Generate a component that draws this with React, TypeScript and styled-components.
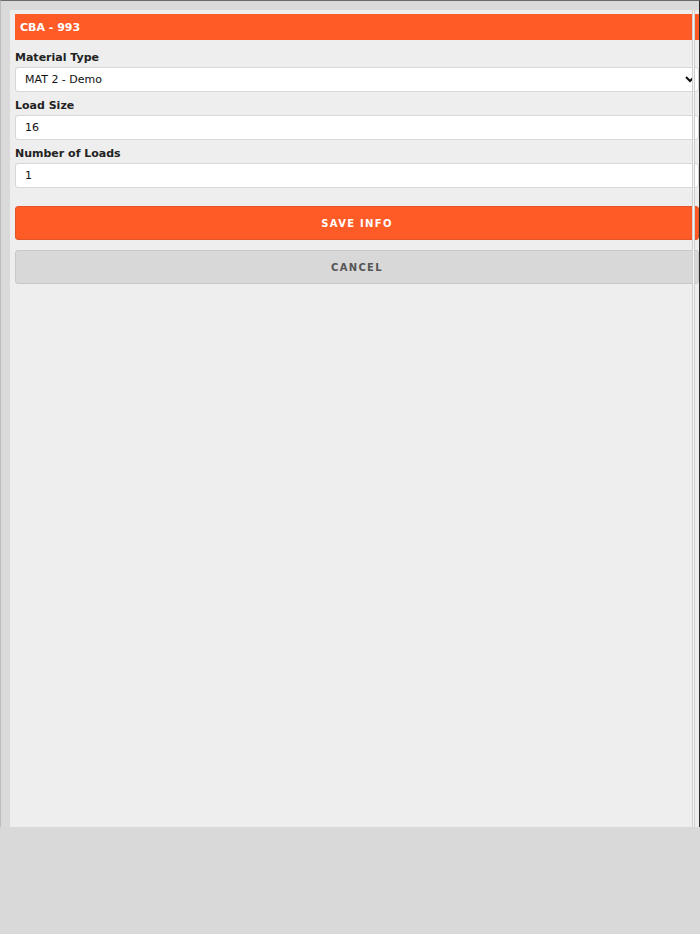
import React from 'react';
import styled, { createGlobalStyle } from 'styled-components';

const GlobalStyle = createGlobalStyle`
  html, body {
    margin: 0;
    padding: 0;
    background: #d9d9d9;
    font-family: "DejaVu Sans", Verdana, sans-serif;
  }
`;

const Frame = styled.div`
  position: relative;
  box-sizing: border-box;
  height: 827px;
  border-top: 1px solid #6a6a6a;
  border-left: 1px solid #bdbdbd;
  border-right: 1px solid #2a2a2a;
  padding: 9px 0 0 9px;
  background: #dadada;
  overflow: hidden;

  &::after {
    content: '';
    position: absolute;
    top: 9px;
    bottom: 0;
    right: 4px;
    width: 1px;
    background: #f6f6f6;
    border-left: 1px solid #cfcfcf;
    border-right: 1px solid #cfcfcf;
  }
`;

const Panel = styled.div`
  box-sizing: border-box;
  height: 100%;
  background: #eeeeee;
  padding: 4px 0 0 5px;
`;

const Header = styled.div`
  height: 26px;
  background: #ff5b27;
  color: #ffffff;
  font-size: 11px;
  font-weight: bold;
  line-height: 27px;
  padding-left: 5px;
  margin-bottom: 10px;
`;

const Field = styled.div`
  display: flex;
  flex-direction: column;
  margin-bottom: 6px;
`;

const Label = styled.label`
  font-size: 11px;
  font-weight: bold;
  color: #222222;
  line-height: 16px;
  margin-bottom: 1px;
`;

const Select = styled.select`
  box-sizing: border-box;
  height: 25px;
  width: 100%;
  background: #ffffff;
  border: 1px solid #d8d8d8;
  border-radius: 3px;
  padding: 0 4px 0 5px;
  font-family: "DejaVu Sans", Verdana, sans-serif;
  font-size: 11px;
  color: #111111;
`;

const Input = styled.input`
  box-sizing: border-box;
  height: 25px;
  width: 100%;
  background: #ffffff;
  border: 1px solid #d8d8d8;
  border-radius: 3px;
  padding: 0 9px;
  font-family: "DejaVu Sans", Verdana, sans-serif;
  font-size: 11px;
  color: #111111;
  outline: none;
`;

const Actions = styled.div`
  display: flex;
  flex-direction: column;
  gap: 10px;
  margin-top: 18px;
`;

const Button = styled.button<{ $primary?: boolean }>`
  box-sizing: border-box;
  height: 34px;
  width: 100%;
  border-radius: 3px;
  border: 1px solid ${p => (p.$primary ? '#e0552a' : '#c8c8c8')};
  background: ${p => (p.$primary ? '#ff5b27' : '#d8d8d8')};
  color: ${p => (p.$primary ? '#ffffff' : '#555555')};
  font-family: "DejaVu Sans", Verdana, sans-serif;
  font-size: 10px;
  font-weight: bold;
  letter-spacing: 1.3px;
  text-transform: uppercase;
  cursor: pointer;
`;

export default function App() {
  return (
    <>
      <GlobalStyle />
      <Frame>
        <Panel>
          <Header>CBA - 993</Header>
          <Field>
            <Label>Material Type</Label>
            <Select defaultValue="mat2">
              <option value="mat1">MAT 1 - Demo</option>
              <option value="mat2">MAT 2 - Demo</option>
            </Select>
          </Field>
          <Field>
            <Label>Load Size</Label>
            <Input defaultValue="16" />
          </Field>
          <Field>
            <Label>Number of Loads</Label>
            <Input defaultValue="1" />
          </Field>
          <Actions>
            <Button $primary>Save Info</Button>
            <Button>Cancel</Button>
          </Actions>
        </Panel>
      </Frame>
    </>
  );
}
